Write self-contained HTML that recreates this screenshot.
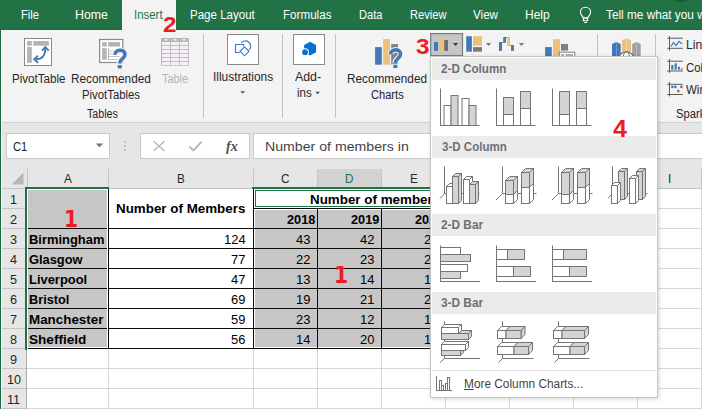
<!DOCTYPE html>
<html><head><meta charset="utf-8"><title>Excel Insert Chart</title>
<style>
html,body{margin:0;padding:0;}
body{width:702px;height:409px;overflow:hidden;background:#fff;font-family:"Liberation Sans",sans-serif;}
#app{position:relative;width:702px;height:409px;overflow:hidden;background:#fff;}
.t{position:absolute;white-space:nowrap;transform-origin:0 0;font-family:"Liberation Sans",sans-serif;}
.a{position:absolute;}

</style></head>
<body>
<div id="app">
<div class="a" style="left:0px;top:0px;width:702px;height:30px;background:#217346;"></div>
<div class="a" style="left:0px;top:30px;width:702px;height:92px;background:#f3f3f3;"></div>
<div class="a" style="left:122.4px;top:0px;width:53.4px;height:31px;background:#f3f3f3;"></div>
<div class="a" style="left:0px;top:122px;width:702px;height:47px;background:#e6e6e6;"></div>
<div class="a" style="left:670.5px;top:-8px;width:19.5px;height:10.2px;background:#175a35;border-radius:50%;"></div>
<div class="a" style="left:203px;top:34px;width:1px;height:84px;background:#c2c2c2;"></div>
<div class="a" style="left:281.5px;top:34px;width:1px;height:84px;background:#c2c2c2;"></div>
<div class="a" style="left:335px;top:34px;width:1px;height:84px;background:#c2c2c2;"></div>
<div class="a" style="left:597.3px;top:34px;width:1px;height:84px;background:#c2c2c2;"></div>
<div class="a" style="left:655.3px;top:34px;width:1px;height:84px;background:#c2c2c2;"></div>
<div class="a" style="left:0px;top:121.7px;width:702px;height:1.2px;background:#d2d2d2;"></div>
<div class="a" style="left:6px;top:133px;width:103.6px;height:26px;background:#fff;border:1px solid #c9c9c9;box-sizing:border-box;"></div>
<div class="a" style="left:140px;top:133px;width:110px;height:26px;background:#fff;border:1px solid #c9c9c9;box-sizing:border-box;"></div>
<div class="a" style="left:253px;top:133px;width:460px;height:26px;background:#fff;border:1px solid #c9c9c9;box-sizing:border-box;"></div>
<div class="a" style="left:0px;top:168px;width:702px;height:20px;background:#e6e6e6;"></div>
<div class="a" style="left:0px;top:188px;width:26px;height:221px;background:#e6e6e6;"></div>
<div class="a" style="left:318px;top:169px;width:63.5px;height:18px;background:#d2d2d2;"></div>
<div class="a" style="left:27px;top:169px;width:1px;height:19px;background:#c4c4c4;"></div>
<div class="a" style="left:108px;top:169px;width:1px;height:19px;background:#c4c4c4;"></div>
<div class="a" style="left:253px;top:169px;width:1px;height:19px;background:#c4c4c4;"></div>
<div class="a" style="left:317px;top:169px;width:1px;height:19px;background:#c4c4c4;"></div>
<div class="a" style="left:381px;top:169px;width:1px;height:19px;background:#c4c4c4;"></div>
<div class="a" style="left:445px;top:169px;width:1px;height:19px;background:#c4c4c4;"></div>
<div class="a" style="left:509px;top:169px;width:1px;height:19px;background:#c4c4c4;"></div>
<div class="a" style="left:573px;top:169px;width:1px;height:19px;background:#c4c4c4;"></div>
<div class="a" style="left:637px;top:169px;width:1px;height:19px;background:#c4c4c4;"></div>
<div class="a" style="left:701px;top:169px;width:1px;height:19px;background:#c4c4c4;"></div>
<div class="a" style="left:0px;top:188px;width:702px;height:1px;background:#c4c4c4;"></div>
<div class="a" style="left:26px;top:188px;width:1px;height:221px;background:#ababab;"></div>
<div class="a" style="left:2px;top:208px;width:24px;height:1px;background:#c4c4c4;"></div>
<div class="a" style="left:27px;top:208px;width:675px;height:1px;background:#d6d6d6;"></div>
<div class="a" style="left:2px;top:228px;width:24px;height:1px;background:#c4c4c4;"></div>
<div class="a" style="left:27px;top:228px;width:675px;height:1px;background:#d6d6d6;"></div>
<div class="a" style="left:2px;top:248px;width:24px;height:1px;background:#c4c4c4;"></div>
<div class="a" style="left:27px;top:248px;width:675px;height:1px;background:#d6d6d6;"></div>
<div class="a" style="left:2px;top:268px;width:24px;height:1px;background:#c4c4c4;"></div>
<div class="a" style="left:27px;top:268px;width:675px;height:1px;background:#d6d6d6;"></div>
<div class="a" style="left:2px;top:288px;width:24px;height:1px;background:#c4c4c4;"></div>
<div class="a" style="left:27px;top:288px;width:675px;height:1px;background:#d6d6d6;"></div>
<div class="a" style="left:2px;top:308px;width:24px;height:1px;background:#c4c4c4;"></div>
<div class="a" style="left:27px;top:308px;width:675px;height:1px;background:#d6d6d6;"></div>
<div class="a" style="left:2px;top:328px;width:24px;height:1px;background:#c4c4c4;"></div>
<div class="a" style="left:27px;top:328px;width:675px;height:1px;background:#d6d6d6;"></div>
<div class="a" style="left:2px;top:348px;width:24px;height:1px;background:#c4c4c4;"></div>
<div class="a" style="left:27px;top:348px;width:675px;height:1px;background:#d6d6d6;"></div>
<div class="a" style="left:2px;top:368px;width:24px;height:1px;background:#c4c4c4;"></div>
<div class="a" style="left:27px;top:368px;width:675px;height:1px;background:#d6d6d6;"></div>
<div class="a" style="left:2px;top:388px;width:24px;height:1px;background:#c4c4c4;"></div>
<div class="a" style="left:27px;top:388px;width:675px;height:1px;background:#d6d6d6;"></div>
<div class="a" style="left:2px;top:408px;width:24px;height:1px;background:#c4c4c4;"></div>
<div class="a" style="left:27px;top:408px;width:675px;height:1px;background:#d6d6d6;"></div>
<div class="a" style="left:108px;top:189px;width:1px;height:220px;background:#d6d6d6;"></div>
<div class="a" style="left:253px;top:189px;width:1px;height:220px;background:#d6d6d6;"></div>
<div class="a" style="left:317px;top:189px;width:1px;height:220px;background:#d6d6d6;"></div>
<div class="a" style="left:381px;top:189px;width:1px;height:220px;background:#d6d6d6;"></div>
<div class="a" style="left:445px;top:189px;width:1px;height:220px;background:#d6d6d6;"></div>
<div class="a" style="left:509px;top:189px;width:1px;height:220px;background:#d6d6d6;"></div>
<div class="a" style="left:573px;top:189px;width:1px;height:220px;background:#d6d6d6;"></div>
<div class="a" style="left:637px;top:189px;width:1px;height:220px;background:#d6d6d6;"></div>
<div class="a" style="left:701px;top:189px;width:1px;height:220px;background:#d6d6d6;"></div>
<svg class="a" style="left:0;top:168px" width="27" height="21"><polygon points="23.5,4.6 23.5,16.4 11.7,16.4" fill="#b7b7b7"/></svg>
<div class="a" style="left:27px;top:189px;width:81.5px;height:159px;background:#fff;"></div>
<div class="a" style="left:28px;top:190px;width:79px;height:157px;background:#c6c6c6;"></div>
<div class="a" style="left:108.5px;top:189px;width:145px;height:159px;background:#fff;"></div>
<div class="a" style="left:254.5px;top:189px;width:255px;height:159px;background:#fff;"></div>
<div class="a" style="left:255.2px;top:210px;width:254px;height:137px;background:#c6c6c6;"></div>
<div class="a" style="left:28px;top:227.8px;width:79px;height:1.2px;background:#0a0a0a;"></div>
<div class="a" style="left:108px;top:227.8px;width:402px;height:1.2px;background:#0a0a0a;"></div>
<div class="a" style="left:28px;top:247.8px;width:79px;height:1.2px;background:#0a0a0a;"></div>
<div class="a" style="left:108px;top:247.8px;width:402px;height:1.2px;background:#0a0a0a;"></div>
<div class="a" style="left:28px;top:267.8px;width:79px;height:1.2px;background:#0a0a0a;"></div>
<div class="a" style="left:108px;top:267.8px;width:402px;height:1.2px;background:#0a0a0a;"></div>
<div class="a" style="left:28px;top:287.8px;width:79px;height:1.2px;background:#0a0a0a;"></div>
<div class="a" style="left:108px;top:287.8px;width:402px;height:1.2px;background:#0a0a0a;"></div>
<div class="a" style="left:28px;top:307.8px;width:79px;height:1.2px;background:#0a0a0a;"></div>
<div class="a" style="left:108px;top:307.8px;width:402px;height:1.2px;background:#0a0a0a;"></div>
<div class="a" style="left:28px;top:327.8px;width:79px;height:1.2px;background:#0a0a0a;"></div>
<div class="a" style="left:108px;top:327.8px;width:402px;height:1.2px;background:#0a0a0a;"></div>
<div class="a" style="left:28px;top:347.8px;width:80px;height:1.2px;background:#0a0a0a;"></div>
<div class="a" style="left:108px;top:347.8px;width:402px;height:1.2px;background:#0a0a0a;"></div>
<div class="a" style="left:253.3px;top:208px;width:256px;height:1.2px;background:#0a0a0a;"></div>
<div class="a" style="left:108px;top:189px;width:1.2px;height:160px;background:#0a0a0a;"></div>
<div class="a" style="left:253.3px;top:189px;width:1.2px;height:160px;background:#0a0a0a;"></div>
<div class="a" style="left:316.9px;top:208px;width:1.2px;height:141px;background:#0a0a0a;"></div>
<div class="a" style="left:380.9px;top:208px;width:1.2px;height:141px;background:#0a0a0a;"></div>
<div class="a" style="left:444.9px;top:208px;width:1.2px;height:141px;background:#0a0a0a;"></div>
<div class="a" style="left:509.3px;top:189px;width:1.2px;height:160px;background:#0a0a0a;"></div>
<div class="a" style="left:25px;top:187.2px;width:84px;height:1.8px;background:#217346;"></div>
<div class="a" style="left:25px;top:187.2px;width:2px;height:162.8px;background:#217346;"></div>
<div class="a" style="left:252.3px;top:187.2px;width:260px;height:1.8px;background:#217346;"></div>
<div class="a" style="left:255.2px;top:190.2px;width:255px;height:16.6px;border:1.2px solid #217346;box-sizing:border-box;"></div>
<div class="a" style="left:0px;top:29px;width:702px;height:1px;background:#1a6a3d;"></div>
<div class="a" style="left:122.4px;top:29px;width:53.4px;height:1.2px;background:#f3f3f3;"></div>
<div class="a" style="left:0px;top:30px;width:2px;height:379px;background:#f8f8f8;"></div>
<div class="a" style="left:0px;top:29px;width:1.1px;height:380px;background:#1a6a3d;"></div>
<svg class="a" style="left:0;top:0" width="702" height="409" viewBox="0 0 702 409"><rect x="24.5" y="38.5" width="27" height="27" fill="#fff" stroke="#8a8a8a"/><rect x="27.10" y="41.00" width="4.70" height="4.70" fill="#b3b3b3"/><rect x="33.20" y="41.00" width="15.70" height="4.70" fill="#b3b3b3"/><rect x="27.10" y="47.00" width="4.70" height="15.80" fill="#b3b3b3"/><path d="M35,59.2 C42.5,59.6 45.3,55.5 45.3,48" fill="none" stroke="#4379b9" stroke-width="1.9"/><path d="M38,55.6 L34.2,59.2 L38,62.8" fill="none" stroke="#4379b9" stroke-width="1.9" stroke-linejoin="miter"/><path d="M41.9,50.7 L45.3,47.1 L48.7,50.7" fill="none" stroke="#4379b9" stroke-width="1.9" stroke-linejoin="miter"/><rect x="99.6" y="39.5" width="23.2" height="23" fill="#fff" stroke="#8a8a8a" stroke-width="1.2"/><rect x="102.10" y="42.10" width="4.60" height="4.40" fill="#b3b3b3"/><rect x="108.10" y="42.10" width="11.90" height="4.40" fill="#b3b3b3"/><rect x="102.10" y="48.20" width="4.60" height="11.50" fill="#b3b3b3"/><rect x="108.10" y="48.00" width="0.80" height="12.00" fill="#a0a0a0"/><rect x="108.90" y="50.50" width="10.60" height="0.90" fill="#bdbdbd"/><rect x="108.90" y="53.30" width="10.60" height="0.90" fill="#bdbdbd"/><rect x="108.90" y="56.10" width="10.60" height="0.90" fill="#bdbdbd"/><rect x="108.90" y="59.20" width="10.60" height="0.90" fill="#bdbdbd"/><path d="M115.00,54.70 C115.00,48.90 125.00,48.90 125.00,54.40 C125.00,58.60 119.80,58.80 119.70,63.50" fill="none" stroke="#f3f3f3" stroke-width="5.8" stroke-linecap="butt"/><rect x="116.70" y="64.20" width="6.20" height="5.20" fill="#f3f3f3"/><path d="M115.00,54.70 C115.00,48.90 125.00,48.90 125.00,54.40 C125.00,58.60 119.80,58.80 119.70,63.50" fill="none" stroke="#4379b9" stroke-width="3.6"/><rect x="117.70" y="65.10" width="4.10" height="3.30" fill="#4379b9"/><rect x="161.00" y="38.00" width="28.00" height="27.80" fill="#b9b9b9"/><rect x="162.00" y="42.00" width="8.10" height="3.10" fill="#f6f0f6"/><rect x="171.00" y="42.00" width="8.10" height="3.10" fill="#f6f0f6"/><rect x="180.00" y="42.00" width="8.10" height="3.10" fill="#f6f0f6"/><rect x="162.00" y="46.00" width="8.10" height="3.10" fill="#f6f0f6"/><rect x="171.00" y="46.00" width="8.10" height="3.10" fill="#f6f0f6"/><rect x="180.00" y="46.00" width="8.10" height="3.10" fill="#f6f0f6"/><rect x="162.00" y="50.00" width="8.10" height="3.10" fill="#f6f0f6"/><rect x="171.00" y="50.00" width="8.10" height="3.10" fill="#f6f0f6"/><rect x="180.00" y="50.00" width="8.10" height="3.10" fill="#f6f0f6"/><rect x="162.00" y="54.00" width="8.10" height="3.10" fill="#f6f0f6"/><rect x="171.00" y="54.00" width="8.10" height="3.10" fill="#f6f0f6"/><rect x="180.00" y="54.00" width="8.10" height="3.10" fill="#f6f0f6"/><rect x="162.00" y="58.00" width="8.10" height="3.10" fill="#f6f0f6"/><rect x="171.00" y="58.00" width="8.10" height="3.10" fill="#f6f0f6"/><rect x="180.00" y="58.00" width="8.10" height="3.10" fill="#f6f0f6"/><rect x="162.00" y="62.00" width="8.10" height="3.10" fill="#f6f0f6"/><rect x="171.00" y="62.00" width="8.10" height="3.10" fill="#f6f0f6"/><rect x="180.00" y="62.00" width="8.10" height="3.10" fill="#f6f0f6"/><polygon points="164.3,39.2 167.7,39.2 166,41" fill="#fff"/><polygon points="173.3,39.2 176.7,39.2 175,41" fill="#fff"/><polygon points="182.3,39.2 185.7,39.2 184,41" fill="#fff"/><rect x="227.5" y="34.5" width="31" height="30" fill="#fff" stroke="#8a8a8a"/><path d="M243.5,46 V44.5 H235.5 V52.5 H239.6" fill="none" stroke="#3f78bd" stroke-width="1.1"/><path d="M241.3,42.8 A4.7,4.7 0 1 1 249.4,49.8" fill="none" stroke="#3f78bd" stroke-width="1.15"/><polygon points="244.5,46.8 249,51.3 244.5,55.8 240,51.3" fill="#fff" stroke="#3f78bd" stroke-width="1.15"/><polygon points="240.3,91.3 245,91.3 242.65,93.8" fill="#555"/><rect x="293.5" y="34.5" width="31" height="30" fill="#fff" stroke="#8a8a8a"/><polygon points="310.1,41.8 316.1,44.9 316.1,52.3 310.1,55.5 304.1,52.3 304.1,44.9" fill="#0b6fd0"/><circle cx="305" cy="52.2" r="3.9" fill="#fff"/><circle cx="305" cy="52.2" r="2.9" fill="#0b6fd0"/><polygon points="315.3,91.8 320,91.8 317.65,94.3" fill="#555"/><rect x="375.10" y="47.10" width="6.70" height="17.60" fill="#4379b9"/><rect x="383.10" y="39.00" width="6.90" height="25.70" fill="#ebc27b"/><rect x="391.20" y="44.10" width="6.80" height="20.60" fill="#7f7f7f"/><path d="M390.60,54.30 C390.60,48.50 400.60,48.50 400.60,54.00 C400.60,58.20 395.40,58.40 395.30,63.10" fill="none" stroke="#f3f3f3" stroke-width="5.8" stroke-linecap="butt"/><rect x="392.30" y="63.80" width="6.20" height="5.20" fill="#f3f3f3"/><path d="M390.60,54.30 C390.60,48.50 400.60,48.50 400.60,54.00 C400.60,58.20 395.40,58.40 395.30,63.10" fill="none" stroke="#4379b9" stroke-width="3.6"/><rect x="393.30" y="64.70" width="4.10" height="3.30" fill="#4379b9"/><rect x="430.7" y="33.6" width="31.8" height="22" fill="#c6c6c6" stroke="#7d7d7d" stroke-width="1.2"/><rect x="434.00" y="42.00" width="4.00" height="8.90" fill="#4379b9"/><rect x="439.00" y="37.00" width="4.00" height="13.90" fill="#ebc27b"/><rect x="444.20" y="40.00" width="3.80" height="10.90" fill="#6e6e6e"/><polygon points="453,43 458.2,43 455.6,46" fill="#3a3a3a"/><rect x="465.70" y="35.70" width="16.80" height="16.50" fill="#f9f9f9"/><rect x="466.20" y="36.20" width="5.70" height="15.50" fill="#4379b9"/><rect x="473.00" y="36.20" width="9.00" height="9.60" fill="#ebc27b"/><rect x="473.00" y="47.10" width="9.00" height="4.60" fill="#7a7a7a"/><polygon points="486,43 491,43 488.5,46" fill="#777"/><rect x="499.00" y="42.00" width="3.00" height="8.90" fill="#4379b9"/><rect x="503.20" y="37.00" width="2.80" height="5.80" fill="#4379b9"/><rect x="507.10" y="37.00" width="2.90" height="8.80" fill="#ebc27b"/><rect x="511.10" y="45.00" width="2.80" height="5.90" fill="#6e6e6e"/><rect x="502.00" y="42.00" width="1.40" height="0.70" fill="#555"/><rect x="506.00" y="37.00" width="1.20" height="0.70" fill="#555"/><rect x="510.00" y="45.10" width="1.20" height="0.70" fill="#555"/><polygon points="518.9,43 524.1,43 521.5,46" fill="#777"/><rect x="545.10" y="47.10" width="6.70" height="9.90" fill="#4379b9"/><rect x="553.00" y="39.20" width="7.00" height="17.80" fill="#ebc27b"/><rect x="561.00" y="44.00" width="7.00" height="6.60" fill="#7f7f7f"/><rect x="559.2" y="52.2" width="15.6" height="6" fill="#fff" stroke="#7f7f7f" stroke-width="1"/><rect x="561.00" y="54.00" width="3.00" height="3.00" fill="#b3b3b3"/><rect x="565.50" y="54.00" width="7.50" height="3.00" fill="#b3b3b3"/><polygon points="612,44 616.3,42 620.7,44 620.7,57 612,57" fill="#3f78bd"/><polygon points="622,40.3 626.5,38.2 631,40.3 631,57 622,57" fill="#ebc27b"/><polygon points="632.2,44 636.5,42 640.7,44 640.7,57 632.2,57" fill="#a0a0a0"/><rect x="616.00" y="42.00" width="0.80" height="15.00" fill="#7ea3d3"/><rect x="626.10" y="38.20" width="0.80" height="18.80" fill="#f3dbae"/><rect x="636.10" y="42.00" width="0.80" height="15.00" fill="#c4c4c4"/><circle cx="626.3" cy="60" r="8.2" fill="#fff" stroke="#6e6e6e" stroke-width="1.2"/><ellipse cx="626.3" cy="60" rx="3.6" ry="8.2" fill="none" stroke="#6e6e6e" stroke-width="1"/><rect x="669.00" y="36.00" width="1.00" height="14.60" fill="#5b5b5b"/><rect x="667.20" y="37.70" width="15.60" height="1.00" fill="#5b5b5b"/><rect x="667.20" y="47.80" width="15.60" height="1.00" fill="#5b5b5b"/><rect x="669.00" y="59.00" width="1.00" height="13.80" fill="#5b5b5b"/><rect x="667.20" y="60.70" width="15.60" height="1.00" fill="#5b5b5b"/><rect x="667.20" y="70.50" width="15.60" height="1.00" fill="#5b5b5b"/><rect x="669.00" y="82.00" width="1.00" height="14.40" fill="#5b5b5b"/><rect x="667.20" y="83.80" width="15.60" height="1.00" fill="#5b5b5b"/><rect x="667.20" y="94.00" width="15.60" height="1.00" fill="#5b5b5b"/><polyline points="671,46.4 673.6,42.4 676,45.4 679,41.4 682.3,44" fill="none" stroke="#4379b9" stroke-width="1.2"/><rect x="671.20" y="65.00" width="2.20" height="4.70" fill="#4379b9"/><rect x="674.60" y="63.30" width="2.20" height="6.40" fill="#4379b9"/><rect x="678.00" y="66.80" width="2.00" height="2.90" fill="#4379b9"/><rect x="680.80" y="68.40" width="1.80" height="1.30" fill="#4379b9"/><rect x="671.20" y="85.60" width="2.30" height="2.50" fill="#4379b9"/><rect x="674.20" y="85.60" width="2.30" height="2.50" fill="#4379b9"/><rect x="680.30" y="85.60" width="2.20" height="2.50" fill="#4379b9"/><rect x="677.20" y="89.80" width="2.30" height="2.60" fill="#d9532c"/><path d="M153.6,141.3 L164.4,150.9 M164.4,141.3 L153.6,150.9" stroke="#b5b5b5" stroke-width="1.3" fill="none"/><path d="M189.3,146.6 L193.6,150.4 L201.6,141.6" stroke="#b5b5b5" stroke-width="1.9" fill="none"/><rect x="124.20" y="141.10" width="1.60" height="1.60" fill="#b0b0b0"/><rect x="124.20" y="145.30" width="1.60" height="1.60" fill="#b0b0b0"/><rect x="124.20" y="149.40" width="1.60" height="1.60" fill="#b0b0b0"/><polygon points="95.8,143.6 103.2,143.6 99.5,147.3" fill="#777"/><path d="M583.4,18 C582.8,16.2 580.4,15 580.4,12.2 C580.4,9.3 582.7,7.2 585.5,7.2 C588.3,7.2 590.6,9.3 590.6,12.2 C590.6,15 588.2,16.2 587.6,18 Z" fill="none" stroke="#fff" stroke-width="1.15"/><rect x="583.4" y="18" width="4.2" height="2.7" fill="none" stroke="#fff" stroke-width="1.1"/><rect x="584.20" y="22.00" width="2.70" height="1.00" fill="#fff"/></svg>
<span class="t" id="t0" style="left:21.40px;top:9.22px;font-size:12.5px;line-height:12.5px;font-weight:normal;color:#fff;transform:scaleX(0.8930);">File</span>
<span class="t" id="t1" style="left:74.50px;top:9.22px;font-size:12.5px;line-height:12.5px;font-weight:normal;color:#fff;transform:scaleX(0.9867);">Home</span>
<span class="t" id="t2" style="left:134.30px;top:9.22px;font-size:12.5px;line-height:12.5px;font-weight:normal;color:#217346;transform:scaleX(0.9147);">Insert</span>
<span class="t" id="t3" style="left:190.40px;top:9.22px;font-size:12.5px;line-height:12.5px;font-weight:normal;color:#fff;transform:scaleX(0.9230);">Page Layout</span>
<span class="t" id="t4" style="left:282.60px;top:9.22px;font-size:12.5px;line-height:12.5px;font-weight:normal;color:#fff;transform:scaleX(0.9310);">Formulas</span>
<span class="t" id="t5" style="left:358.50px;top:9.22px;font-size:12.5px;line-height:12.5px;font-weight:normal;color:#fff;transform:scaleX(0.8862);">Data</span>
<span class="t" id="t6" style="left:409.50px;top:9.22px;font-size:12.5px;line-height:12.5px;font-weight:normal;color:#fff;transform:scaleX(0.8902);">Review</span>
<span class="t" id="t7" style="left:473.00px;top:9.22px;font-size:12.5px;line-height:12.5px;font-weight:normal;color:#fff;transform:scaleX(0.9302);">View</span>
<span class="t" id="t8" style="left:525.00px;top:9.22px;font-size:12.5px;line-height:12.5px;font-weight:normal;color:#fff;transform:scaleX(0.9604);">Help</span>
<span class="t" id="t9" style="left:605.90px;top:9.22px;font-size:12.5px;line-height:12.5px;font-weight:normal;color:#fff;transform:scaleX(0.9440);">Tell me what you want to do</span>
<span class="t" id="t10" style="left:11.50px;top:72.82px;font-size:12.5px;line-height:12.5px;font-weight:normal;color:#262626;transform:scaleX(0.9274);">PivotTable</span>
<span class="t" id="t11" style="left:70.50px;top:72.82px;font-size:12.5px;line-height:12.5px;font-weight:normal;color:#262626;transform:scaleX(0.9414);">Recommended</span>
<span class="t" id="t12" style="left:81.80px;top:88.72px;font-size:12.5px;line-height:12.5px;font-weight:normal;color:#262626;transform:scaleX(0.9071);">PivotTables</span>
<span class="t" id="t13" style="left:162.00px;top:72.82px;font-size:12.5px;line-height:12.5px;font-weight:normal;color:#b3b3b3;transform:scaleX(0.8698);">Table</span>
<span class="t" id="t14" style="left:86.50px;top:107.72px;font-size:12.5px;line-height:12.5px;font-weight:normal;color:#262626;transform:scaleX(0.8550);">Tables</span>
<span class="t" id="t15" style="left:212.70px;top:71.22px;font-size:12.5px;line-height:12.5px;font-weight:normal;color:#262626;transform:scaleX(0.9520);">Illustrations</span>
<span class="t" id="t16" style="left:295.40px;top:71.22px;font-size:12.5px;line-height:12.5px;font-weight:normal;color:#262626;transform:scaleX(0.9884);">Add-</span>
<span class="t" id="t17" style="left:297.30px;top:86.72px;font-size:12.5px;line-height:12.5px;font-weight:normal;color:#262626;transform:scaleX(0.9196);">ins</span>
<span class="t" id="t18" style="left:346.60px;top:72.92px;font-size:12.5px;line-height:12.5px;font-weight:normal;color:#262626;transform:scaleX(0.9438);">Recommended</span>
<span class="t" id="t19" style="left:370.60px;top:88.72px;font-size:12.5px;line-height:12.5px;font-weight:normal;color:#262626;transform:scaleX(0.8879);">Charts</span>
<span class="t" id="t20" style="left:686.40px;top:39.02px;font-size:12.5px;line-height:12.5px;font-weight:normal;color:#262626;transform:scaleX(0.9700);">Line</span>
<span class="t" id="t21" style="left:686.40px;top:61.62px;font-size:12.5px;line-height:12.5px;font-weight:normal;color:#262626;transform:scaleX(0.9100);">Column</span>
<span class="t" id="t22" style="left:686.20px;top:84.32px;font-size:12.5px;line-height:12.5px;font-weight:normal;color:#262626;transform:scaleX(0.9200);">Win/Loss</span>
<span class="t" id="t23" style="left:676.20px;top:107.72px;font-size:12.5px;line-height:12.5px;font-weight:normal;color:#262626;transform:scaleX(0.8950);">Sparklines</span>
<span class="t" id="t24" style="left:162.90px;top:15.30px;font-size:21.5px;line-height:21.5px;font-weight:bold;color:#ed1c24;transform:scaleX(1.1300);">2</span>
<span class="t" id="t25" style="left:415.90px;top:36.60px;font-size:21.5px;line-height:21.5px;font-weight:bold;color:#ed1c24;transform:scaleX(1.1300);">3</span>
<span class="t" id="t27" style="left:64.00px;top:207.09px;font-size:23.3px;line-height:23.3px;font-weight:bold;color:#ed1c24;font-family:'DejaVu Sans', 'Liberation Sans', sans-serif;transform:scaleX(0.8700);">1</span>
<span class="t" id="t28" style="left:333.80px;top:262.89px;font-size:23.3px;line-height:23.3px;font-weight:bold;color:#ed1c24;font-family:'DejaVu Sans', 'Liberation Sans', sans-serif;transform:scaleX(0.8700);">1</span>
<span class="t" id="t29" style="left:13.40px;top:141.12px;font-size:12.5px;line-height:12.5px;font-weight:normal;color:#222;transform:scaleX(0.8884);">C1</span>
<span class="t" id="t30" style="left:264.90px;top:141.02px;font-size:12.5px;line-height:12.5px;font-weight:normal;color:#444;transform:scaleX(1.1312);">Number of members in</span>
<span class="t" id="t31" style="left:226.00px;top:139.55px;font-size:14px;line-height:14px;font-weight:bold;color:#505050;font-family:'Liberation Serif', serif;transform:scaleX(1.0000);font-style:italic;">fx</span>
<span class="t" id="t32" style="left:64.10px;top:171.90px;font-size:13px;line-height:13px;font-weight:normal;color:#262626;transform:scaleX(0.9000);">A</span>
<span class="t" id="t33" style="left:177.10px;top:171.90px;font-size:13px;line-height:13px;font-weight:normal;color:#262626;transform:scaleX(0.9000);">B</span>
<span class="t" id="t34" style="left:281.27px;top:171.90px;font-size:13px;line-height:13px;font-weight:normal;color:#262626;transform:scaleX(0.9000);">C</span>
<span class="t" id="t35" style="left:345.27px;top:171.90px;font-size:13px;line-height:13px;font-weight:normal;color:#217346;transform:scaleX(0.9000);">D</span>
<span class="t" id="t36" style="left:409.60px;top:171.90px;font-size:13px;line-height:13px;font-weight:normal;color:#262626;transform:scaleX(0.9000);">E</span>
<span class="t" id="t37" style="left:473.92px;top:171.90px;font-size:13px;line-height:13px;font-weight:normal;color:#262626;transform:scaleX(0.9000);">F</span>
<span class="t" id="t38" style="left:536.94px;top:171.90px;font-size:13px;line-height:13px;font-weight:normal;color:#262626;transform:scaleX(0.9000);">G</span>
<span class="t" id="t39" style="left:601.27px;top:171.90px;font-size:13px;line-height:13px;font-weight:normal;color:#262626;transform:scaleX(0.9000);">H</span>
<span class="t" id="t40" style="left:667.87px;top:171.90px;font-size:13px;line-height:13px;font-weight:normal;color:#262626;transform:scaleX(0.9000);">I</span>
<span class="t" id="t41" style="left:10.28px;top:192.63px;font-size:13.2px;line-height:13.2px;font-weight:normal;color:#262626;transform:scaleX(0.9600);">1</span>
<span class="t" id="t42" style="left:10.28px;top:212.63px;font-size:13.2px;line-height:13.2px;font-weight:normal;color:#262626;transform:scaleX(0.9600);">2</span>
<span class="t" id="t43" style="left:10.28px;top:232.63px;font-size:13.2px;line-height:13.2px;font-weight:normal;color:#262626;transform:scaleX(0.9600);">3</span>
<span class="t" id="t44" style="left:10.28px;top:252.63px;font-size:13.2px;line-height:13.2px;font-weight:normal;color:#262626;transform:scaleX(0.9600);">4</span>
<span class="t" id="t45" style="left:10.28px;top:272.63px;font-size:13.2px;line-height:13.2px;font-weight:normal;color:#262626;transform:scaleX(0.9600);">5</span>
<span class="t" id="t46" style="left:10.28px;top:292.63px;font-size:13.2px;line-height:13.2px;font-weight:normal;color:#262626;transform:scaleX(0.9600);">6</span>
<span class="t" id="t47" style="left:10.28px;top:312.63px;font-size:13.2px;line-height:13.2px;font-weight:normal;color:#262626;transform:scaleX(0.9600);">7</span>
<span class="t" id="t48" style="left:10.28px;top:332.63px;font-size:13.2px;line-height:13.2px;font-weight:normal;color:#262626;transform:scaleX(0.9600);">8</span>
<span class="t" id="t49" style="left:10.28px;top:352.63px;font-size:13.2px;line-height:13.2px;font-weight:normal;color:#262626;transform:scaleX(0.9600);">9</span>
<span class="t" id="t50" style="left:6.76px;top:372.63px;font-size:13.2px;line-height:13.2px;font-weight:normal;color:#262626;transform:scaleX(0.9600);">10</span>
<span class="t" id="t51" style="left:7.22px;top:392.63px;font-size:13.2px;line-height:13.2px;font-weight:normal;color:#262626;transform:scaleX(0.9600);">11</span>
<span class="t" id="t52" style="left:28.70px;top:233.23px;font-size:13.2px;line-height:13.2px;font-weight:bold;color:#000;transform:scaleX(0.9800);">Birmingham</span>
<span class="t" id="t53" style="left:28.70px;top:253.23px;font-size:13.2px;line-height:13.2px;font-weight:bold;color:#000;transform:scaleX(0.9733);">Glasgow</span>
<span class="t" id="t54" style="left:28.70px;top:273.23px;font-size:13.2px;line-height:13.2px;font-weight:bold;color:#000;transform:scaleX(0.9805);">Liverpool</span>
<span class="t" id="t55" style="left:28.70px;top:293.23px;font-size:13.2px;line-height:13.2px;font-weight:bold;color:#000;transform:scaleX(0.9649);">Bristol</span>
<span class="t" id="t56" style="left:28.70px;top:313.23px;font-size:13.2px;line-height:13.2px;font-weight:bold;color:#000;transform:scaleX(1.0151);">Manchester</span>
<span class="t" id="t57" style="left:28.70px;top:333.23px;font-size:13.2px;line-height:13.2px;font-weight:bold;color:#000;transform:scaleX(1.0290);">Sheffield</span>
<span class="t" id="t58" style="left:116.40px;top:202.43px;font-size:13.2px;line-height:13.2px;font-weight:bold;color:#000;transform:scaleX(1.0148);">Number of Members</span>
<span class="t" id="t59" style="left:310.40px;top:193.43px;font-size:13.2px;line-height:13.2px;font-weight:bold;color:#000;transform:scaleX(1.0150);">Number of members in</span>
<span class="t" id="t60" style="left:287.08px;top:213.03px;font-size:13.2px;line-height:13.2px;font-weight:bold;color:#000;transform:scaleX(0.9650);">2018</span>
<span class="t" id="t61" style="left:351.08px;top:213.03px;font-size:13.2px;line-height:13.2px;font-weight:bold;color:#000;transform:scaleX(0.9650);">2019</span>
<span class="t" id="t62" style="left:415.08px;top:213.03px;font-size:13.2px;line-height:13.2px;font-weight:bold;color:#000;transform:scaleX(0.9650);">2020</span>
<span class="t" id="t63" style="left:224.22px;top:232.83px;font-size:13.2px;line-height:13.2px;font-weight:normal;color:#000;transform:scaleX(0.9800);">124</span>
<span class="t" id="t64" style="left:295.52px;top:232.83px;font-size:13.2px;line-height:13.2px;font-weight:normal;color:#000;transform:scaleX(0.9800);">43</span>
<span class="t" id="t65" style="left:359.52px;top:232.83px;font-size:13.2px;line-height:13.2px;font-weight:normal;color:#000;transform:scaleX(0.9800);">42</span>
<span class="t" id="t66" style="left:423.52px;top:232.83px;font-size:13.2px;line-height:13.2px;font-weight:normal;color:#000;transform:scaleX(0.9800);">20</span>
<span class="t" id="t67" style="left:231.42px;top:252.83px;font-size:13.2px;line-height:13.2px;font-weight:normal;color:#000;transform:scaleX(0.9800);">77</span>
<span class="t" id="t68" style="left:295.52px;top:252.83px;font-size:13.2px;line-height:13.2px;font-weight:normal;color:#000;transform:scaleX(0.9800);">22</span>
<span class="t" id="t69" style="left:359.52px;top:252.83px;font-size:13.2px;line-height:13.2px;font-weight:normal;color:#000;transform:scaleX(0.9800);">23</span>
<span class="t" id="t70" style="left:423.52px;top:252.83px;font-size:13.2px;line-height:13.2px;font-weight:normal;color:#000;transform:scaleX(0.9800);">21</span>
<span class="t" id="t71" style="left:231.42px;top:272.83px;font-size:13.2px;line-height:13.2px;font-weight:normal;color:#000;transform:scaleX(0.9800);">47</span>
<span class="t" id="t72" style="left:295.52px;top:272.83px;font-size:13.2px;line-height:13.2px;font-weight:normal;color:#000;transform:scaleX(0.9800);">13</span>
<span class="t" id="t73" style="left:359.52px;top:272.83px;font-size:13.2px;line-height:13.2px;font-weight:normal;color:#000;transform:scaleX(0.9800);">14</span>
<span class="t" id="t74" style="left:423.52px;top:272.83px;font-size:13.2px;line-height:13.2px;font-weight:normal;color:#000;transform:scaleX(0.9800);">10</span>
<span class="t" id="t75" style="left:231.42px;top:292.83px;font-size:13.2px;line-height:13.2px;font-weight:normal;color:#000;transform:scaleX(0.9800);">69</span>
<span class="t" id="t76" style="left:295.52px;top:292.83px;font-size:13.2px;line-height:13.2px;font-weight:normal;color:#000;transform:scaleX(0.9800);">19</span>
<span class="t" id="t77" style="left:359.52px;top:292.83px;font-size:13.2px;line-height:13.2px;font-weight:normal;color:#000;transform:scaleX(0.9800);">21</span>
<span class="t" id="t78" style="left:423.52px;top:292.83px;font-size:13.2px;line-height:13.2px;font-weight:normal;color:#000;transform:scaleX(0.9800);">20</span>
<span class="t" id="t79" style="left:231.42px;top:312.83px;font-size:13.2px;line-height:13.2px;font-weight:normal;color:#000;transform:scaleX(0.9800);">59</span>
<span class="t" id="t80" style="left:295.52px;top:312.83px;font-size:13.2px;line-height:13.2px;font-weight:normal;color:#000;transform:scaleX(0.9800);">23</span>
<span class="t" id="t81" style="left:359.52px;top:312.83px;font-size:13.2px;line-height:13.2px;font-weight:normal;color:#000;transform:scaleX(0.9800);">12</span>
<span class="t" id="t82" style="left:423.52px;top:312.83px;font-size:13.2px;line-height:13.2px;font-weight:normal;color:#000;transform:scaleX(0.9800);">12</span>
<span class="t" id="t83" style="left:231.42px;top:332.83px;font-size:13.2px;line-height:13.2px;font-weight:normal;color:#000;transform:scaleX(0.9800);">56</span>
<span class="t" id="t84" style="left:295.52px;top:332.83px;font-size:13.2px;line-height:13.2px;font-weight:normal;color:#000;transform:scaleX(0.9800);">14</span>
<span class="t" id="t85" style="left:359.52px;top:332.83px;font-size:13.2px;line-height:13.2px;font-weight:normal;color:#000;transform:scaleX(0.9800);">20</span>
<span class="t" id="t86" style="left:424.47px;top:332.83px;font-size:13.2px;line-height:13.2px;font-weight:normal;color:#000;transform:scaleX(0.9800);">11</span>
<div class="a" style="left:430.3px;top:56px;width:227.7px;height:341.8px;background:#fff;border:1.1px solid #c4c4c4;box-sizing:border-box;box-shadow:1px 1px 4px rgba(0,0,0,.17);"></div>
<div class="a" style="left:432px;top:58px;width:224px;height:22px;background:#ebebeb;"></div>
<div class="a" style="left:432px;top:136px;width:224px;height:22px;background:#ebebeb;"></div>
<div class="a" style="left:432px;top:214px;width:224px;height:22px;background:#ebebeb;"></div>
<div class="a" style="left:432px;top:292px;width:224px;height:22px;background:#ebebeb;"></div>
<div class="a" style="left:432.3px;top:370px;width:223.7px;height:1px;background:#e1e1e1;"></div>
<svg class="a" style="left:0;top:0" width="702" height="409" viewBox="0 0 702 409" shape-rendering="auto"><rect x="444.0" y="105.5" width="7.00" height="20.00" fill="#ffffff" stroke="#757575" stroke-width="1"/><rect x="451.0" y="95.5" width="7.00" height="30.00" fill="#d4d4d4" stroke="#757575" stroke-width="1"/><rect x="462.0" y="98.5" width="7.00" height="27.00" fill="#ffffff" stroke="#757575" stroke-width="1"/><rect x="469.0" y="105.5" width="7.00" height="20.00" fill="#d4d4d4" stroke="#757575" stroke-width="1"/><line x1="440.5" y1="88.5" x2="440.5" y2="125.5" stroke="#757575" stroke-width="1"/><line x1="440.0" y1="125.5" x2="479.5" y2="125.5" stroke="#757575" stroke-width="1"/><rect x="503.5" y="97.5" width="10.00" height="17.00" fill="#d4d4d4" stroke="#757575" stroke-width="1"/><rect x="503.5" y="114.5" width="10.00" height="11.00" fill="#ffffff" stroke="#757575" stroke-width="1"/><rect x="520.5" y="91.5" width="10.00" height="17.00" fill="#d4d4d4" stroke="#757575" stroke-width="1"/><rect x="520.5" y="108.5" width="10.00" height="17.00" fill="#ffffff" stroke="#757575" stroke-width="1"/><line x1="496.5" y1="88.5" x2="496.5" y2="125.5" stroke="#757575" stroke-width="1"/><line x1="496.0" y1="125.5" x2="535.5" y2="125.5" stroke="#757575" stroke-width="1"/><rect x="559.5" y="91.5" width="10.00" height="23.00" fill="#d4d4d4" stroke="#757575" stroke-width="1"/><rect x="559.5" y="114.5" width="10.00" height="11.00" fill="#ffffff" stroke="#757575" stroke-width="1"/><rect x="576.5" y="91.5" width="10.00" height="17.00" fill="#d4d4d4" stroke="#757575" stroke-width="1"/><rect x="576.5" y="108.5" width="10.00" height="17.00" fill="#ffffff" stroke="#757575" stroke-width="1"/><line x1="552.5" y1="88.5" x2="552.5" y2="125.5" stroke="#757575" stroke-width="1"/><line x1="552.0" y1="125.5" x2="591.5" y2="125.5" stroke="#757575" stroke-width="1"/><line x1="444.5" y1="166.5" x2="444.5" y2="193.5" stroke="#757575" stroke-width="1"/><line x1="444.5" y1="193.5" x2="479.5" y2="193.5" stroke="#757575" stroke-width="1"/><line x1="444.5" y1="193.5" x2="440.0" y2="198.5" stroke="#757575" stroke-width="1"/><polygon points="446.50,186.50 449.50,183.50 455.50,183.50 452.50,186.50" fill="#ffffff" stroke="#757575" stroke-width="1" stroke-linejoin="round"/><polygon points="452.50,186.50 455.50,183.50 455.50,200.50 452.50,203.50" fill="#ffffff" stroke="#757575" stroke-width="1" stroke-linejoin="round"/><rect x="446.5" y="186.5" width="6.00" height="17.00" fill="#ffffff" stroke="#757575" stroke-width="1"/><polygon points="452.50,176.50 455.50,173.50 461.50,173.50 458.50,176.50" fill="#d4d4d4" stroke="#757575" stroke-width="1" stroke-linejoin="round"/><polygon points="458.50,176.50 461.50,173.50 461.50,200.50 458.50,203.50" fill="#d4d4d4" stroke="#757575" stroke-width="1" stroke-linejoin="round"/><rect x="452.5" y="176.5" width="6.00" height="27.00" fill="#d4d4d4" stroke="#757575" stroke-width="1"/><polygon points="463.50,179.50 466.50,176.50 472.50,176.50 469.50,179.50" fill="#ffffff" stroke="#757575" stroke-width="1" stroke-linejoin="round"/><polygon points="469.50,179.50 472.50,176.50 472.50,200.50 469.50,203.50" fill="#ffffff" stroke="#757575" stroke-width="1" stroke-linejoin="round"/><rect x="463.5" y="179.5" width="6.00" height="24.00" fill="#ffffff" stroke="#757575" stroke-width="1"/><polygon points="469.50,184.50 472.50,181.50 478.50,181.50 475.50,184.50" fill="#d4d4d4" stroke="#757575" stroke-width="1" stroke-linejoin="round"/><polygon points="475.50,184.50 478.50,181.50 478.50,200.50 475.50,203.50" fill="#d4d4d4" stroke="#757575" stroke-width="1" stroke-linejoin="round"/><rect x="469.5" y="184.5" width="6.00" height="19.00" fill="#d4d4d4" stroke="#757575" stroke-width="1"/><line x1="502.5" y1="166.5" x2="502.5" y2="193.5" stroke="#757575" stroke-width="1"/><line x1="502.5" y1="193.5" x2="536.5" y2="193.5" stroke="#757575" stroke-width="1"/><line x1="502.5" y1="193.5" x2="496.0" y2="200" stroke="#757575" stroke-width="1"/><polygon points="505.50,180.50 509.50,176.50 517.50,176.50 513.50,180.50" fill="#d4d4d4" stroke="#757575" stroke-width="1" stroke-linejoin="round"/><polygon points="513.50,180.50 517.50,176.50 517.50,190.50 513.50,194.50" fill="#d4d4d4" stroke="#757575" stroke-width="1" stroke-linejoin="round"/><polygon points="513.50,194.50 517.50,190.50 517.50,199.50 513.50,203.50" fill="#ffffff" stroke="#757575" stroke-width="1" stroke-linejoin="round"/><rect x="505.5" y="180.5" width="8.00" height="14.00" fill="#d4d4d4" stroke="#757575" stroke-width="1"/><rect x="505.5" y="194.5" width="8.00" height="9.00" fill="#ffffff" stroke="#757575" stroke-width="1"/><polygon points="521.50,172.50 525.50,168.50 533.50,168.50 529.50,172.50" fill="#d4d4d4" stroke="#757575" stroke-width="1" stroke-linejoin="round"/><polygon points="529.50,172.50 533.50,168.50 533.50,183.50 529.50,187.50" fill="#d4d4d4" stroke="#757575" stroke-width="1" stroke-linejoin="round"/><polygon points="529.50,187.50 533.50,183.50 533.50,199.50 529.50,203.50" fill="#ffffff" stroke="#757575" stroke-width="1" stroke-linejoin="round"/><rect x="521.5" y="172.5" width="8.00" height="15.00" fill="#d4d4d4" stroke="#757575" stroke-width="1"/><rect x="521.5" y="187.5" width="8.00" height="16.00" fill="#ffffff" stroke="#757575" stroke-width="1"/><line x1="558.5" y1="166.5" x2="558.5" y2="193.5" stroke="#757575" stroke-width="1"/><line x1="558.5" y1="193.5" x2="592.5" y2="193.5" stroke="#757575" stroke-width="1"/><line x1="558.5" y1="193.5" x2="552.0" y2="200" stroke="#757575" stroke-width="1"/><polygon points="561.50,172.50 565.50,168.50 573.50,168.50 569.50,172.50" fill="#d4d4d4" stroke="#757575" stroke-width="1" stroke-linejoin="round"/><polygon points="569.50,172.50 573.50,168.50 573.50,190.50 569.50,194.50" fill="#d4d4d4" stroke="#757575" stroke-width="1" stroke-linejoin="round"/><polygon points="569.50,194.50 573.50,190.50 573.50,199.50 569.50,203.50" fill="#ffffff" stroke="#757575" stroke-width="1" stroke-linejoin="round"/><rect x="561.5" y="172.5" width="8.00" height="22.00" fill="#d4d4d4" stroke="#757575" stroke-width="1"/><rect x="561.5" y="194.5" width="8.00" height="9.00" fill="#ffffff" stroke="#757575" stroke-width="1"/><polygon points="577.50,172.50 581.50,168.50 589.50,168.50 585.50,172.50" fill="#d4d4d4" stroke="#757575" stroke-width="1" stroke-linejoin="round"/><polygon points="585.50,172.50 589.50,168.50 589.50,183.50 585.50,187.50" fill="#d4d4d4" stroke="#757575" stroke-width="1" stroke-linejoin="round"/><polygon points="585.50,187.50 589.50,183.50 589.50,199.50 585.50,203.50" fill="#ffffff" stroke="#757575" stroke-width="1" stroke-linejoin="round"/><rect x="577.5" y="172.5" width="8.00" height="15.00" fill="#d4d4d4" stroke="#757575" stroke-width="1"/><rect x="577.5" y="187.5" width="8.00" height="16.00" fill="#ffffff" stroke="#757575" stroke-width="1"/><line x1="612.5" y1="166.5" x2="612.5" y2="193.5" stroke="#757575" stroke-width="1"/><line x1="612.5" y1="193.5" x2="647.5" y2="193.5" stroke="#757575" stroke-width="1"/><line x1="612.5" y1="193.5" x2="608.0" y2="198" stroke="#757575" stroke-width="1"/><polygon points="618.50,171.50 621.50,168.50 627.50,168.50 624.50,171.50" fill="#d4d4d4" stroke="#757575" stroke-width="1" stroke-linejoin="round"/><polygon points="624.50,171.50 627.50,168.50 627.50,196.50 624.50,199.50" fill="#d4d4d4" stroke="#757575" stroke-width="1" stroke-linejoin="round"/><rect x="618.5" y="171.5" width="6.00" height="28.00" fill="#d4d4d4" stroke="#757575" stroke-width="1"/><polygon points="636.50,171.50 639.50,168.50 645.50,168.50 642.50,171.50" fill="#d4d4d4" stroke="#757575" stroke-width="1" stroke-linejoin="round"/><polygon points="642.50,171.50 645.50,168.50 645.50,196.50 642.50,199.50" fill="#d4d4d4" stroke="#757575" stroke-width="1" stroke-linejoin="round"/><rect x="636.5" y="171.5" width="6.00" height="28.00" fill="#d4d4d4" stroke="#757575" stroke-width="1"/><polygon points="611.50,185.50 614.50,182.50 620.50,182.50 617.50,185.50" fill="#ffffff" stroke="#757575" stroke-width="1" stroke-linejoin="round"/><polygon points="617.50,185.50 620.50,182.50 620.50,200.50 617.50,203.50" fill="#ffffff" stroke="#757575" stroke-width="1" stroke-linejoin="round"/><rect x="611.5" y="185.5" width="6.00" height="18.00" fill="#ffffff" stroke="#757575" stroke-width="1"/><polygon points="629.50,178.50 632.50,175.50 638.50,175.50 635.50,178.50" fill="#ffffff" stroke="#757575" stroke-width="1" stroke-linejoin="round"/><polygon points="635.50,178.50 638.50,175.50 638.50,200.50 635.50,203.50" fill="#ffffff" stroke="#757575" stroke-width="1" stroke-linejoin="round"/><rect x="629.5" y="178.5" width="6.00" height="25.00" fill="#ffffff" stroke="#757575" stroke-width="1"/><rect x="440.5" y="247.5" width="20.00" height="7.00" fill="#ffffff" stroke="#757575" stroke-width="1"/><rect x="440.5" y="254.5" width="30.00" height="7.00" fill="#d4d4d4" stroke="#757575" stroke-width="1"/><rect x="440.5" y="264.5" width="27.00" height="7.00" fill="#ffffff" stroke="#757575" stroke-width="1"/><rect x="440.5" y="271.5" width="20.00" height="7.00" fill="#d4d4d4" stroke="#757575" stroke-width="1"/><line x1="440.5" y1="245.5" x2="440.5" y2="281.5" stroke="#757575" stroke-width="1"/><line x1="440.0" y1="281.5" x2="480.0" y2="281.5" stroke="#757575" stroke-width="1"/><rect x="496.5" y="249.5" width="11.00" height="10.00" fill="#ffffff" stroke="#757575" stroke-width="1"/><rect x="507.5" y="249.5" width="17.00" height="10.00" fill="#d4d4d4" stroke="#757575" stroke-width="1"/><rect x="496.5" y="266.5" width="17.00" height="10.00" fill="#ffffff" stroke="#757575" stroke-width="1"/><rect x="513.5" y="266.5" width="17.00" height="10.00" fill="#d4d4d4" stroke="#757575" stroke-width="1"/><line x1="496.5" y1="245.5" x2="496.5" y2="281.5" stroke="#757575" stroke-width="1"/><line x1="496.0" y1="281.5" x2="536.0" y2="281.5" stroke="#757575" stroke-width="1"/><rect x="552.5" y="249.5" width="11.00" height="10.00" fill="#ffffff" stroke="#757575" stroke-width="1"/><rect x="563.5" y="249.5" width="23.00" height="10.00" fill="#d4d4d4" stroke="#757575" stroke-width="1"/><rect x="552.5" y="266.5" width="17.00" height="10.00" fill="#ffffff" stroke="#757575" stroke-width="1"/><rect x="569.5" y="266.5" width="17.00" height="10.00" fill="#d4d4d4" stroke="#757575" stroke-width="1"/><line x1="552.5" y1="245.5" x2="552.5" y2="281.5" stroke="#757575" stroke-width="1"/><line x1="552.0" y1="281.5" x2="592.0" y2="281.5" stroke="#757575" stroke-width="1"/><line x1="444.5" y1="321.5" x2="444.5" y2="358.5" stroke="#757575" stroke-width="1"/><line x1="444.5" y1="358.5" x2="480.0" y2="358.5" stroke="#757575" stroke-width="1"/><line x1="444.5" y1="358.5" x2="440.0" y2="362.5" stroke="#757575" stroke-width="1"/><polygon points="441.50,333.50 444.50,330.50 471.50,330.50 468.50,333.50" fill="#d4d4d4" stroke="#757575" stroke-width="1" stroke-linejoin="round"/><polygon points="468.50,333.50 471.50,330.50 471.50,336.50 468.50,339.50" fill="#d4d4d4" stroke="#757575" stroke-width="1" stroke-linejoin="round"/><rect x="441.5" y="333.5" width="27.00" height="6.00" fill="#d4d4d4" stroke="#757575" stroke-width="1"/><polygon points="441.50,327.50 444.50,324.50 461.50,324.50 458.50,327.50" fill="#ffffff" stroke="#757575" stroke-width="1" stroke-linejoin="round"/><polygon points="458.50,327.50 461.50,324.50 461.50,330.50 458.50,333.50" fill="#ffffff" stroke="#757575" stroke-width="1" stroke-linejoin="round"/><rect x="441.5" y="327.5" width="17.00" height="6.00" fill="#ffffff" stroke="#757575" stroke-width="1"/><polygon points="441.50,350.50 444.50,347.50 463.50,347.50 460.50,350.50" fill="#d4d4d4" stroke="#757575" stroke-width="1" stroke-linejoin="round"/><polygon points="460.50,350.50 463.50,347.50 463.50,352.50 460.50,355.50" fill="#d4d4d4" stroke="#757575" stroke-width="1" stroke-linejoin="round"/><rect x="441.5" y="350.5" width="19.00" height="5.00" fill="#d4d4d4" stroke="#757575" stroke-width="1"/><polygon points="441.50,344.50 444.50,341.50 468.50,341.50 465.50,344.50" fill="#ffffff" stroke="#757575" stroke-width="1" stroke-linejoin="round"/><polygon points="465.50,344.50 468.50,341.50 468.50,347.50 465.50,350.50" fill="#ffffff" stroke="#757575" stroke-width="1" stroke-linejoin="round"/><rect x="441.5" y="344.5" width="24.00" height="6.00" fill="#ffffff" stroke="#757575" stroke-width="1"/><line x1="502.5" y1="321.5" x2="502.5" y2="358.5" stroke="#757575" stroke-width="1"/><line x1="502.5" y1="358.5" x2="533.5" y2="358.5" stroke="#757575" stroke-width="1"/><line x1="502.5" y1="358.5" x2="498.5" y2="362.5" stroke="#757575" stroke-width="1"/><polygon points="497.50,330.50 501.50,326.50 510.00,326.50 506.00,330.50" fill="#ffffff" stroke="#757575" stroke-width="1" stroke-linejoin="round"/><polygon points="506.00,330.50 510.00,326.50 525.00,326.50 521.00,330.50" fill="#d4d4d4" stroke="#757575" stroke-width="1" stroke-linejoin="round"/><polygon points="521.00,330.50 525.00,326.50 525.00,334.50 521.00,338.50" fill="#d4d4d4" stroke="#757575" stroke-width="1" stroke-linejoin="round"/><rect x="497.5" y="330.5" width="8.50" height="8.00" fill="#ffffff" stroke="#757575" stroke-width="1"/><rect x="506.0" y="330.5" width="15.00" height="8.00" fill="#d4d4d4" stroke="#757575" stroke-width="1"/><polygon points="497.50,346.50 501.50,342.50 518.00,342.50 514.00,346.50" fill="#ffffff" stroke="#757575" stroke-width="1" stroke-linejoin="round"/><polygon points="514.00,346.50 518.00,342.50 532.50,342.50 528.50,346.50" fill="#d4d4d4" stroke="#757575" stroke-width="1" stroke-linejoin="round"/><polygon points="528.50,346.50 532.50,342.50 532.50,350.50 528.50,354.50" fill="#d4d4d4" stroke="#757575" stroke-width="1" stroke-linejoin="round"/><rect x="497.5" y="346.5" width="16.50" height="8.00" fill="#ffffff" stroke="#757575" stroke-width="1"/><rect x="514.0" y="346.5" width="14.50" height="8.00" fill="#d4d4d4" stroke="#757575" stroke-width="1"/><line x1="558.5" y1="321.5" x2="558.5" y2="358.5" stroke="#757575" stroke-width="1"/><line x1="558.5" y1="358.5" x2="589.5" y2="358.5" stroke="#757575" stroke-width="1"/><line x1="558.5" y1="358.5" x2="554.5" y2="362.5" stroke="#757575" stroke-width="1"/><polygon points="553.50,330.50 557.50,326.50 566.00,326.50 562.00,330.50" fill="#ffffff" stroke="#757575" stroke-width="1" stroke-linejoin="round"/><polygon points="562.00,330.50 566.00,326.50 588.50,326.50 584.50,330.50" fill="#d4d4d4" stroke="#757575" stroke-width="1" stroke-linejoin="round"/><polygon points="584.50,330.50 588.50,326.50 588.50,334.50 584.50,338.50" fill="#d4d4d4" stroke="#757575" stroke-width="1" stroke-linejoin="round"/><rect x="553.5" y="330.5" width="8.50" height="8.00" fill="#ffffff" stroke="#757575" stroke-width="1"/><rect x="562.0" y="330.5" width="22.50" height="8.00" fill="#d4d4d4" stroke="#757575" stroke-width="1"/><polygon points="553.50,346.50 557.50,342.50 574.00,342.50 570.00,346.50" fill="#ffffff" stroke="#757575" stroke-width="1" stroke-linejoin="round"/><polygon points="570.00,346.50 574.00,342.50 588.50,342.50 584.50,346.50" fill="#d4d4d4" stroke="#757575" stroke-width="1" stroke-linejoin="round"/><polygon points="584.50,346.50 588.50,342.50 588.50,350.50 584.50,354.50" fill="#d4d4d4" stroke="#757575" stroke-width="1" stroke-linejoin="round"/><rect x="553.5" y="346.5" width="16.50" height="8.00" fill="#ffffff" stroke="#757575" stroke-width="1"/><rect x="570.0" y="346.5" width="14.50" height="8.00" fill="#d4d4d4" stroke="#757575" stroke-width="1"/><line x1="436.5" y1="376" x2="436.5" y2="390.5" stroke="#757575" stroke-width="1"/><line x1="436" y1="390.5" x2="452" y2="390.5" stroke="#757575" stroke-width="1"/><rect x="439.5" y="380.5" width="2.00" height="10.00" fill="#ffffff" stroke="#757575" stroke-width="1"/><rect x="441.5" y="385.5" width="2.00" height="5.00" fill="#ffffff" stroke="#757575" stroke-width="1"/><rect x="445.5" y="383.5" width="2.00" height="7.00" fill="#ffffff" stroke="#757575" stroke-width="1"/><rect x="447.5" y="377.5" width="2.00" height="13.00" fill="#ffffff" stroke="#757575" stroke-width="1"/></svg>
<span class="t" id="t26" style="left:613.40px;top:117.81px;font-size:23.5px;line-height:23.5px;font-weight:bold;color:#ed1c24;transform:scaleX(1.0700);">4</span>
<span class="t" id="t87" style="left:441.30px;top:63.12px;font-size:12.5px;line-height:12.5px;font-weight:bold;color:#6b7078;transform:scaleX(0.9338);">2-D Column</span>
<span class="t" id="t88" style="left:441.60px;top:141.42px;font-size:12.5px;line-height:12.5px;font-weight:bold;color:#6b7078;transform:scaleX(0.9239);">3-D Column</span>
<span class="t" id="t89" style="left:441.30px;top:219.32px;font-size:12.5px;line-height:12.5px;font-weight:bold;color:#6b7078;transform:scaleX(0.9467);">2-D Bar</span>
<span class="t" id="t90" style="left:441.30px;top:297.22px;font-size:12.5px;line-height:12.5px;font-weight:bold;color:#6b7078;transform:scaleX(0.9467);">3-D Bar</span>
<span class="t" id="t91" style="left:464.30px;top:377.72px;font-size:12.5px;line-height:12.5px;font-weight:normal;color:#444;transform:scaleX(0.9479);"><span style="text-decoration:underline">M</span>ore Column Charts...</span>
</div>
</body></html>
